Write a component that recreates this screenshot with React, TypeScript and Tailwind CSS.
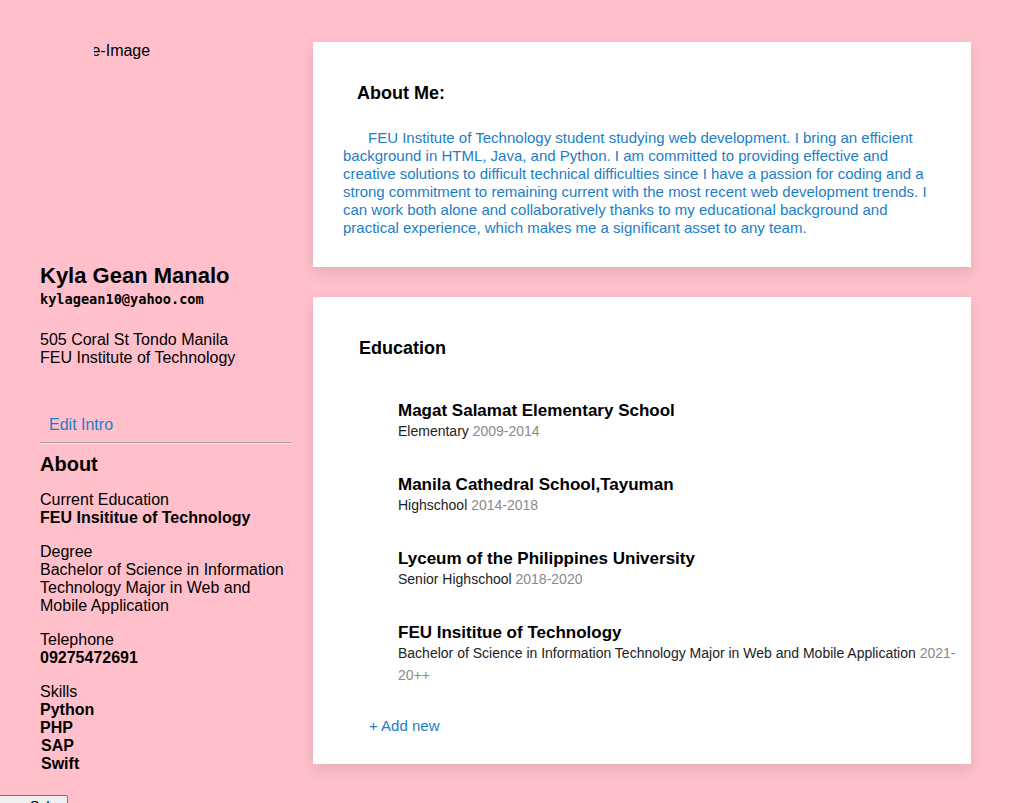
export default function App() {
  const schools = [
    { name: "Magat Salamat Elementary School", level: "Elementary", years: "2009-2014" },
    { name: "Manila Cathedral School,Tayuman", level: "Highschool", years: "2014-2018" },
    { name: "Lyceum of the Philippines University", level: "Senior Highschool", years: "2018-2020" },
    {
      name: "FEU Insititue of Technology",
      level: "Bachelor of Science in Information Technology Major in Web and Mobile Application",
      years: "2021-20++",
    },
  ];

  return (
    <div className="min-h-screen w-full bg-[#ffc0cb] font-['Liberation_Sans',Arial,sans-serif] text-black overflow-hidden">
      <div className="flex pt-[42px] pl-[40px] gap-[22px]">
        {/* Left column */}
        <div className="w-[251px] shrink-0">
          {/* broken profile image, alt text only */}
          <div className="h-[221px]">
            <div className="ml-[54px] w-[80px] overflow-hidden">
              <span className="block -ml-[39px] text-[16px] leading-[18px] whitespace-nowrap">Profile-Image</span>
            </div>
          </div>

          <h2 className="text-[22px] leading-[26px] font-bold">Kyla Gean Manalo</h2>
          <p className="mt-[2px] font-['DejaVu_Sans_Mono',monospace] font-bold text-[13.6px] leading-[16px]">
            kylagean10@yahoo.com
          </p>

          <p className="mt-[24px] text-[16px] leading-[18px]">
            505 Coral St Tondo Manila
            <br />
            FEU Institute of Technology
          </p>

          <a className="block mt-[49px] pl-[9px] text-[16px] leading-[18px] text-[#1c7ec6]">Edit Intro</a>
          <div className="mt-[8px] h-[2px] border-t border-t-[#9c9c9c] border-b border-b-[#e8e8e8]" />

          <h3 className="mt-[8px] text-[20px] leading-[24px] font-bold">About</h3>

          <div className="mt-[15px] flex flex-col gap-[16px] text-[16px] leading-[18px]">
            <div>
              <p>Current Education</p>
              <p className="font-bold">FEU Insititue of Technology</p>
            </div>
            <div>
              <p>Degree</p>
              <p>Bachelor of Science in Information Technology Major in Web and Mobile Application</p>
            </div>
            <div>
              <p>Telephone</p>
              <p className="font-bold">09275472691</p>
            </div>
            <div>
              <p>Skills</p>
              <p className="font-bold">Python</p>
              <p className="font-bold">PHP</p>
              <p className="font-bold pl-[1px]">SAP</p>
              <p className="font-bold pl-[1px]">Swift</p>
            </div>
          </div>

          <button className="mt-[22px] -ml-[68px] block whitespace-nowrap bg-[#efefef] border border-[#767676] rounded-[2px] px-[6px] py-[1px] text-[13.33px] leading-[17px]">
            Change Color
          </button>
        </div>

        {/* Right column */}
        <div className="w-[658px] shrink-0 flex flex-col gap-[30px]">
          <section className="bg-white shadow-[0_6px_14px_rgba(0,0,0,0.1)] px-[30px] pt-[40px] pb-[30px]">
            <h3 className="pl-[14px] text-[18px] leading-[22px] font-bold">About Me:</h3>
            <p className="mt-[25px] text-[15px] leading-[18px] text-[#1c7ec6] indent-[25px]">
              FEU Institute of Technology student studying web development. I bring an efficient background in
              HTML, Java, and Python. I am committed to providing effective and creative solutions to difficult
              technical difficulties since I have a passion for coding and a strong commitment to remaining current
              with the most recent web development trends. I can work both alone and collaboratively thanks to my
              educational background and practical experience, which makes me a significant asset to any team.
            </p>
          </section>

          <section className="bg-white shadow-[0_6px_14px_rgba(0,0,0,0.1)] pt-[40px] pb-[29px]">
            <h3 className="pl-[46px] text-[18px] leading-[22px] font-bold">Education</h3>
            <div className="mt-[41px] pl-[85px] pr-[13px] flex flex-col gap-[32px]">
              {schools.map((s, i) => (
                <div key={i}>
                  <p className="pt-[1px] text-[17px] leading-[19px] font-bold">{s.name}</p>
                  <p className="text-[14px] leading-[22px] text-[#222]">
                    {s.level} <span className="text-[#8a8a8a]">{s.years}</span>
                  </p>
                </div>
              ))}
            </div>
            <a className="block mt-[31px] pl-[56px] text-[15px] leading-[18px] text-[#1c7ec6]">+ Add new</a>
          </section>
        </div>
      </div>
    </div>
  );
}
